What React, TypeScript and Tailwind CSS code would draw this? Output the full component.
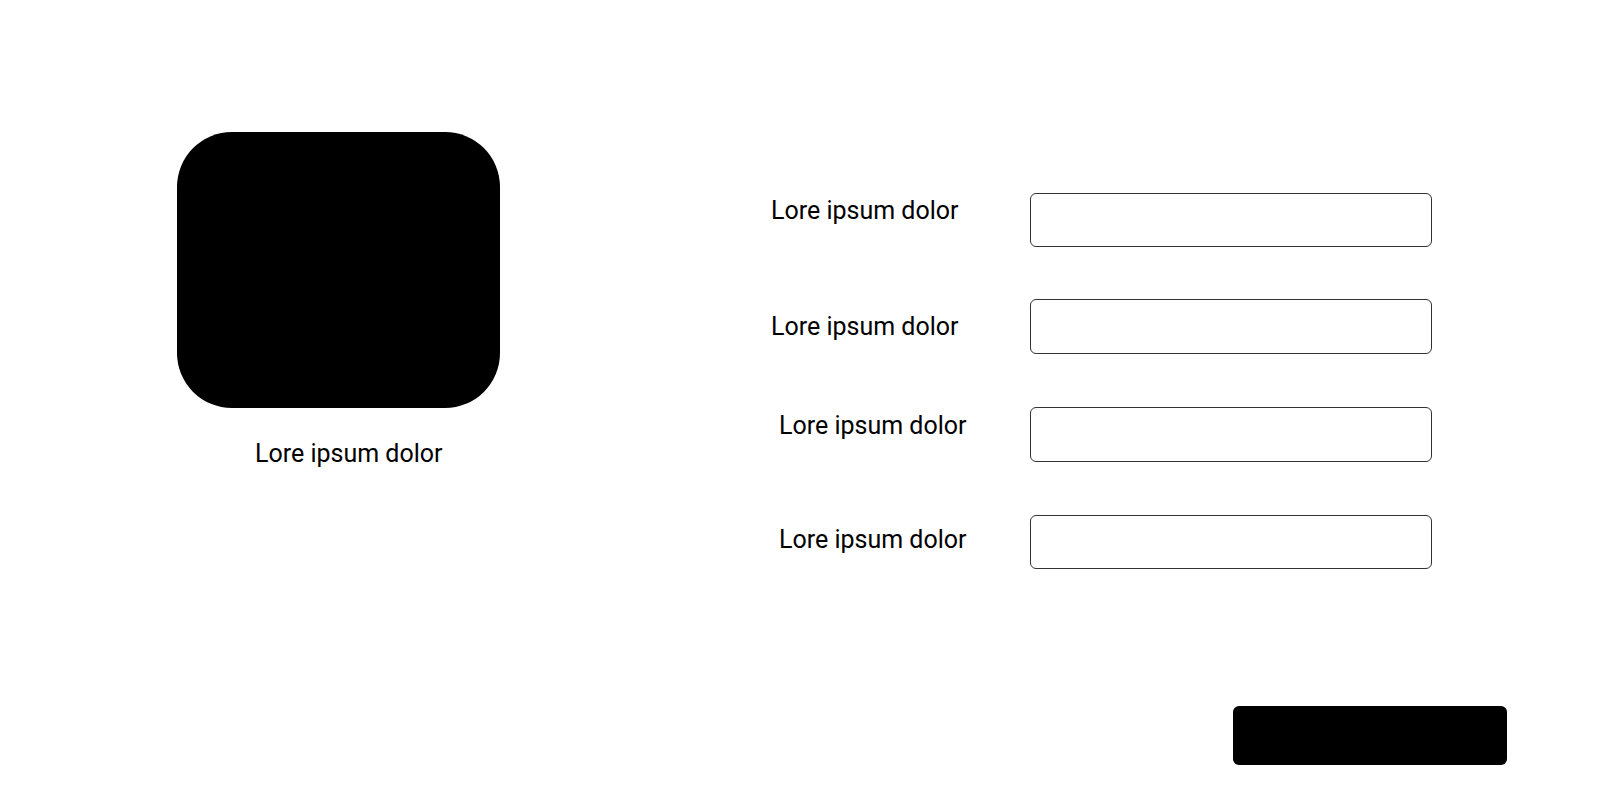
import React from "react";

const font = { fontFamily: "Roboto, 'Noto Sans', Arial, sans-serif" };

function Row({
  label,
  labelTop,
  labelPad,
  height,
  mt,
}: {
  label: string;
  labelTop: string;
  labelPad: string;
  height: string;
  mt: string;
}) {
  return (
    <div className={`flex items-start ${mt}`}>
      <div className={`w-[260px] ${labelPad} ${labelTop} text-[25px] leading-[30px] text-black whitespace-nowrap`}>
        {label}
      </div>
      <input
        type="text"
        className={`w-[402px] ${height} rounded-[6px] border-[1.5px] border-[#333333] bg-white outline-none`}
      />
    </div>
  );
}

export default function App() {
  return (
    <div className="w-[1600px] h-[802px] bg-white flex flex-col" style={font}>
      <div className="flex items-start">
        <div className="ml-[177px] mt-[132px] w-[323px] flex flex-col">
          <div className="w-[323px] h-[276px] rounded-[55px] bg-black" />
          <div className="mt-[31px] pl-[78px] text-[25px] leading-[30px] text-black whitespace-nowrap">
            Lore ipsum dolor
          </div>
        </div>
        <div className="ml-[270px] mt-[193px] flex flex-col">
          <Row label="Lore ipsum dolor" labelTop="mt-[3px]" labelPad="pl-[1px]" height="h-[54px]" mt="mt-0" />
          <Row label="Lore ipsum dolor" labelTop="mt-[13px]" labelPad="pl-[1px]" height="h-[55px]" mt="mt-[52px]" />
          <Row label="Lore ipsum dolor" labelTop="mt-[4px]" labelPad="pl-[9px]" height="h-[55px]" mt="mt-[53px]" />
          <Row label="Lore ipsum dolor" labelTop="mt-[10px]" labelPad="pl-[9px]" height="h-[54px]" mt="mt-[53px]" />
        </div>
      </div>
      <div className="flex justify-end pr-[93px] mt-[137px]">
        <button className="w-[274px] h-[59px] rounded-[6px] bg-black" />
      </div>
    </div>
  );
}
